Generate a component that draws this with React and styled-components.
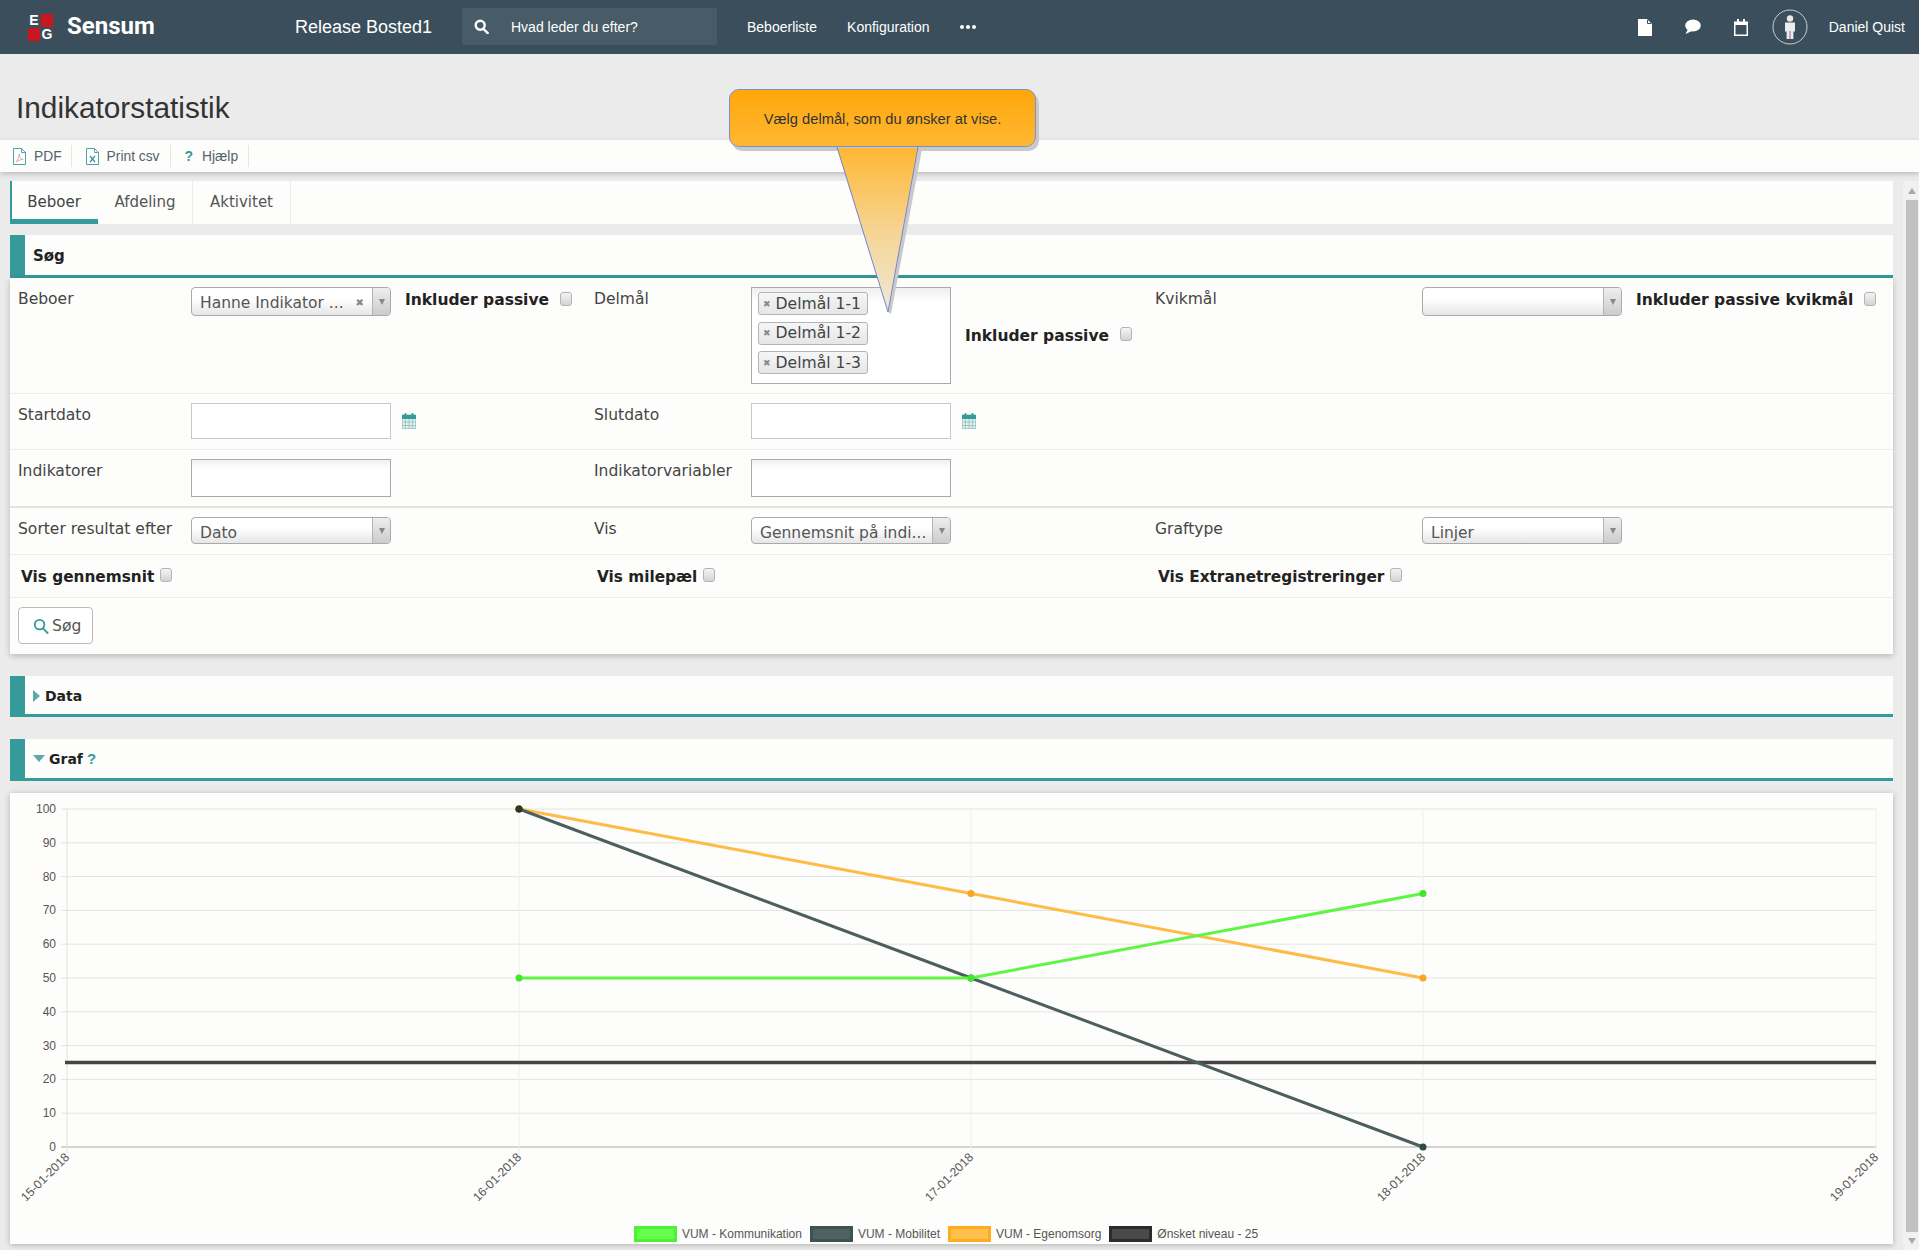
import React from "react";
import styled, { createGlobalStyle } from "styled-components";

const Global = createGlobalStyle`
  html, body { margin: 0; padding: 0; background: #ebebeb; }
  * { box-sizing: border-box; }
`;

const TEAL = "#359a99";
const SANS = `"Liberation Sans", Arial, sans-serif`;
const BODY = `"DejaVu Sans", Verdana, sans-serif`;

const Page = styled.div`
  position: relative;
  width: 1919px;
  height: 1250px;
  overflow: hidden;
  background: #ebebeb;
  font-family: ${BODY};
  color: #444;
`;

/* ---------- top bar ---------- */
const TopBar = styled.header`
  height: 54px;
  background: #3a4f5b;
  display: flex;
  align-items: center;
  color: #fff;
  font-family: ${SANS};
  font-size: 14px;
  padding-left: 28px;
`;
const Logo = styled.div`
  display: grid;
  grid-template-columns: 12px 12px;
  grid-template-rows: 13px 13px;
  gap: 1px;
  width: 25px;
`;
const LogoCell = styled.span`
  background: ${(p) => (p.$red ? "#c8171e" : "transparent")};
  color: #fff;
  font: bold 14px/13px ${SANS};
  text-align: center;
`;
const Brand = styled.span`
  font: bold 24px/1 Roboto, ${SANS};
  margin: 0 0 3px 14px;
  width: 228px;
`;
const Release = styled.span`
  font-size: 18px;
  width: 167px;
`;
const Search = styled.div`
  width: 255px;
  height: 37px;
  background: #475c67;
  border-radius: 2px;
  display: flex;
  align-items: center;
  padding-left: 12px;
  gap: 22px;
  margin: 0 30px 1px 0;
`;
const NavLink = styled.span`
  margin-right: ${(p) => p.$gap}px;
`;
const Dots = styled.span`
  display: flex;
  gap: 2px;
`;
const Dot = styled.i`
  width: 4px;
  height: 4px;
  border-radius: 50%;
  background: #fff;
`;
const RightGroup = styled.div`
  margin-left: auto;
  display: flex;
  align-items: center;
  padding-right: 14px;
`;
const IconSlot = styled.span`
  display: flex;
  margin-right: ${(p) => p.$gap}px;
`;

/* ---------- title + toolbar ---------- */
const TitleBar = styled.div`
  height: 86px;
  padding: 37px 0 0 16px;
`;
const Title = styled.h1`
  margin: 0;
  font: normal 29.8px/34px ${SANS};
  color: #333;
`;
const Toolbar = styled.div`
  height: 32px;
  background: #fdfdfb;
  box-shadow: 0 2px 5px rgba(0, 0, 0, 0.2);
  display: flex;
  align-items: center;
  padding-left: 13px;
  font: 13.8px ${SANS};
  color: #56616b;
  position: relative;
`;
const ToolItem = styled.span`
  display: flex;
  align-items: center;
  height: 22px;
  gap: ${(p) => p.$gap}px;
  padding-right: ${(p) => p.$pr}px;
  margin-right: 14px;
  border-right: 1px solid #e6e6e6;
`;
const QMark = styled.b`
  color: ${TEAL};
  font: bold ${(p) => p.$size || 14}px ${SANS};
`;

/* ---------- body ---------- */
const Body = styled.div`
  display: flex;
  height: 1078px;
  padding: 9px 0 0 10px;
`;
const Main = styled.main`
  width: 1883px;
  display: flex;
  flex-direction: column;
`;
const Scrollbar = styled.div`
  width: 16px;
  margin-left: 10px;
  background: #f1f1f1;
  display: flex;
  flex-direction: column;
  align-items: center;
  padding: 7px 0 6px 2px;
  color: #aaa;
`;
const ScrollArrow = styled.span`
  width: 0;
  height: 0;
  border-left: 4px solid transparent;
  border-right: 4px solid transparent;
  ${(p) => (p.$down ? "border-top: 6px solid #aaa;" : "border-bottom: 6px solid #aaa;")}
`;
const ScrollThumb = styled.div`
  width: 12px;
  flex: 1;
  margin: 6px 0 6px;
  background: #c1c1c1;
`;

const TabBar = styled.nav`
  height: 43px;
  background: #fdfdfb;
  display: flex;
  margin-bottom: 11px;
`;
const Tab = styled.span`
  width: ${(p) => p.$w}px;
  display: flex;
  align-items: center;
  justify-content: center;
  font-size: 15px;
  padding-bottom: 2px;
  color: ${(p) => (p.$active ? "#3d444a" : "#555")};
  border-right: 1px solid #ededed;
  ${(p) =>
    p.$active &&
    `border-left: 2px solid ${TEAL}; border-bottom: 5px solid ${TEAL}; border-right: 0; padding: 3px 2px 0 0;`}
`;

const SectionHead = styled.div`
  height: ${(p) => p.$h}px;
  background: #fdfdfb;
  border-left: 15px solid ${TEAL};
  border-bottom: 3px solid ${TEAL};
  display: flex;
  align-items: center;
  gap: ${(p) => p.$gap || 5}px;
  padding: ${(p) => p.$padTop ?? 1}px 0 0 8px;
  font: bold ${(p) => p.$fs || 15}px ${BODY};
  color: #222;
  margin-top: ${(p) => p.$top || 0}px;
`;
const Caret = styled.span`
  width: 0;
  height: 0;
  ${(p) =>
    p.$open
      ? `border-left: 6px solid transparent; border-right: 6px solid transparent; border-top: 7px solid #5ba9a8; `
      : `border-top: 6px solid transparent; border-bottom: 6px solid transparent; border-left: 7px solid #5ba9a8;`}
`;
const FormPanel = styled.section`
  background: #fdfdfb;
  box-shadow: 0 2px 6px rgba(0, 0, 0, 0.22);
`;
const Row = styled.div`
  height: ${(p) => p.$h}px;
  padding: ${(p) => p.$pad ?? 9}px 0 0 8px;
  display: grid;
  grid-template-columns: 173px 403px 157px 404px 267px 1fr;
  align-items: start;
  border-bottom: ${(p) => (p.$thick ? 2 : 1)}px solid ${(p) => (p.$thick ? "#e2e2e2" : "#ececec")};
  ${(p) => p.$last && "border-bottom: 0;"}
`;
const Label = styled.label`
  font-size: 15.55px;
  line-height: 25px;
  color: #444;
  white-space: nowrap;
`;
const Field = styled.div`
  display: flex;
  align-items: ${(p) => (p.$center ? "center" : "flex-start")};
  gap: ${(p) => p.$gap || 0}px;
  ${(p) => p.$h && `height: ${p.$h}px;`}
`;
const BoldLabel = styled.span`
  font: bold ${(p) => p.$fs || 15.3}px/24px ${BODY};
  color: #222;
  white-space: nowrap;
  margin-top: ${(p) => p.$top || 0}px;
`;
const Check = styled.span`
  display: inline-block;
  width: 12px;
  height: 14px;
  border: 1px solid #b4b4b4;
  border-radius: 3px;
  background: linear-gradient(#f4f4f4, #d4d4d4);
  margin: ${(p) => p.$top ?? 5}px 0 ${(p) => p.$bottom || 0}px ${(p) => p.$left || 0}px;
  flex: none;
`;
const Select = styled.div`
  width: 200px;
  height: ${(p) => p.$h || 29}px;
  border: 1px solid #aaa;
  border-radius: 4px;
  background: linear-gradient(#fff 40%, #e6e6e6);
  display: flex;
  font-size: 15.5px;
  color: #555;
  overflow: hidden;
  flex: none;
`;
const SelectText = styled.span`
  flex: 1;
  padding: ${(p) => p.$top || 5}px 0 0 8px;
  white-space: nowrap;
  overflow: hidden;
  line-height: 20px;
`;
const Clear = styled.span`
  color: #888;
  font: bold 10px/29px ${BODY};
  padding-right: 8px;
`;
const SelectArrow = styled.span`
  width: 18px;
  border-left: 1px solid #b4b4b4;
  background: linear-gradient(#eee, #ccc);
  display: flex;
  align-items: center;
  justify-content: center;
  &::after {
    content: "";
    border-left: 3px solid transparent;
    border-right: 3px solid transparent;
    border-top: 6px solid #888;
  }
`;
const MultiBox = styled.div`
  width: 200px;
  height: 97px;
  border: 1px solid #aaa;
  background: linear-gradient(#eee, #fff 14px);
  padding: 4px 6px;
  display: flex;
  flex-direction: column;
  gap: 6.5px;
  flex: none;
`;
const Chip = styled.span`
  width: 110px;
  height: 23px;
  border: 1px solid #b4b4b4;
  border-radius: 3px;
  background: linear-gradient(#f6f6f6, #e6e6e6);
  font-size: 15.6px;
  line-height: 20px;
  color: #444;
  display: flex;
  align-items: center;
  gap: 5px;
  padding-left: 4px;
  white-space: nowrap;
`;
const ChipX = styled.span`
  color: #888;
  font: bold 9px ${BODY};
`;
const TextBox = styled.div`
  width: 200px;
  height: ${(p) => p.$h}px;
  border: 1px solid ${(p) => (p.$dark ? "#aaa" : "#c8c8c8")};
  background: ${(p) => (p.$dark ? "linear-gradient(#f1f1f1, #fff 10px)" : "#fff")};
  flex: none;
`;
const CalSlot = styled.span`
  display: flex;
  margin: 10px 0 0 11px;
`;
const SpanCell = styled.div`
  grid-column: span 2;
  display: flex;
  align-items: flex-start;
  gap: 6px;
  padding-left: 3px;
`;
const SearchBtn = styled.button`
  width: 75px;
  height: 37px;
  border: 1px solid #bbb;
  border-radius: 4px;
  background: #fff;
  font: 15.6px ${BODY};
  color: #555;
  display: flex;
  align-items: center;
  gap: 3px;
  padding: 0 0 0 14px;
`;

const ChartPanel = styled.section`
  height: 451px;
  margin-top: 12px;
  background: #fdfdfb;
  box-shadow: 0 1px 6px rgba(0, 0, 0, 0.25);
  display: flex;
  flex-direction: column;
`;
const ChartSvg = styled.svg`
  display: block;
  flex: none;
`;
const Legend = styled.div`
  display: flex;
  justify-content: center;
  gap: 8px;
  padding-right: 11px;
  margin-top: 8px;
  font: 12px/16px ${SANS};
  color: #555;
`;
const LegendItem = styled.span`
  display: flex;
  gap: 5px;
`;
const Swatch = styled.i`
  width: 43px;
  height: 16px;
  border: 3px solid ${(p) => p.$c};
  background: ${(p) => p.$f};
`;

/* ---------- tooltip overlay ---------- */
const Bubble = styled.div`
  position: absolute;
  left: 729px;
  top: 89px;
  width: 307px;
  height: 58px;
  border: 1px solid #7a8ed0;
  border-radius: 10px;
  background: linear-gradient(#ffa70a, #ffb733);
  box-shadow: 3px 4px 0 #c9c9c9;
  font: 14.7px/58px ${SANS};
  color: #333;
  text-align: center;
`;
const TailSvg = styled.svg`
  position: absolute;
  left: 834px;
  top: 146px;
`;

/* ---------- icons ---------- */
const SearchIcon = ({ c = "#fff", s = 15, w = 2.6 }) => (
  <svg width={s} height={s} viewBox="0 0 16 16" fill="none" stroke={c} strokeWidth={w}>
    <circle cx="6.6" cy="6.6" r="4.8" />
    <path d="M10 10.4l4.6 4.6" strokeLinecap="round" />
  </svg>
);
const DocIcon = () => (
  <svg width="14" height="17" viewBox="0 0 14 17">
    <path d="M0 0h9l5 5v12H0z" fill="#fff" />
    <path d="M9.5 1v3.5H13" fill="none" stroke="#3a4f5b" strokeWidth="1" />
  </svg>
);
const BubbleIcon = () => (
  <svg width="17" height="16" viewBox="0 0 17 16">
    <ellipse cx="9" cy="6.5" rx="7.8" ry="6" fill="#fff" />
    <path d="M4 10 L1.5 15 L8 12z" fill="#fff" />
  </svg>
);
const CalTop = () => (
  <svg width="14" height="17" viewBox="0 0 14 17">
    <path d="M0 2.5h14V17H0z M1.5 6v9.5h11V6z" fill="#fff" fillRule="evenodd" />
    <rect x="3" y="0" width="2" height="5" fill="#fff" />
    <rect x="9" y="0" width="2" height="5" fill="#fff" />
  </svg>
);
const Avatar = () => (
  <svg width="36" height="36" viewBox="0 0 36 36">
    <circle cx="18" cy="18" r="17" fill="none" stroke="#c9d0d4" strokeWidth="1" />
    <circle cx="18" cy="9.5" r="3.2" fill="#e8e8e8" />
    <path d="M13 13.5h10v9h-1.6V30H14.6v-7.5H13z" fill="#ececec" />
    <path d="M18 22v8" stroke="#a05a9a" strokeWidth="1" />
  </svg>
);
const FileIcon = ({ kind }) => (
  <svg width="13" height="17" viewBox="0 0 13 17" fill="none" stroke="#4fa3a8" strokeWidth="1">
    <path d="M.5.5h8l4 4v12H.5z" fill="#fff" />
    <path d="M8.5.5v4h4" />
    {kind === "pdf" ? (
      <path d="M3 14c2-2 3-5 3.2-8 .2 3 2 5 4 5.5-3 0-5 1-7.200 2.500z" stroke="#d29a9a" strokeWidth=".8" />
    ) : (
      <path d="M4 8l5 6M9 8l-5 6" stroke="#3d8f94" strokeWidth="1.200" />
    )}
  </svg>
);
const CalIcon = () => (
  <svg width="14" height="16" viewBox="0 0 14 16">
    <rect x="0" y="2" width="14" height="14" fill="#dcefee" stroke="#359a99" strokeWidth=".6" />
    <rect x="0" y="2" width="14" height="4" fill="#359a99" />
    <rect x="2.500" y="0" width="2" height="4" rx="1" fill="#359a99" />
    <rect x="9.500" y="0" width="2" height="4" rx="1" fill="#359a99" />
    <path d="M0 9h14M0 12.500h14M3.500 6v10M7 6v10M10.500 6v10" stroke="#8fb9b8" strokeWidth=".7" />
  </svg>
);

/* ---------- chart ---------- */
const PL = 57, PT = 16, PB = 354; // panel coordinates
const XS = [57, 509, 961, 1413, 1866];
const DATES = ["15-01-2018", "16-01-2018", "17-01-2018", "18-01-2018", "19-01-2018"];
const yOf = (v) => PB - ((PB - PT) * v) / 100;
const SERIES = [
  { color: "#ffbb47", dot: "#f5a623", pts: [[1, 100], [2, 75], [3, 50]] },
  { color: "#4c5f5f", dot: "#2f4a4a", pts: [[1, 100], [2, 50], [3, 0]] },
  { color: "#5ff545", dot: "#43e62b", pts: [[1, 50], [2, 50], [3, 75]] },
];

const Chart = () => (
  <ChartSvg width="1883" height="425" viewBox="0 0 1883 425">
    {Array.from({ length: 11 }, (_, i) => i * 10).map((v) => (
      <g key={v}>
        <line x1={PL - 6} x2={XS[4]} y1={yOf(v)} y2={yOf(v)} stroke={v === 0 ? "#aaa" : "#e4e4e4"} strokeWidth="1" />
        <text x={PL - 11} y={yOf(v) + 4} textAnchor="end" fontFamily={SANS} fontSize="12" fill="#555">
          {v}
        </text>
      </g>
    ))}
    {XS.map((x, i) => (
      <g key={x}>
        <line x1={x} x2={x} y1={PT} y2={PB + 6} stroke={i === 0 ? "#e0e0e0" : "#eee"} strokeWidth="1" />
        <text
          transform={`translate(${x + 3},${PB + 11}) rotate(-45)`}
          textAnchor="end"
          fontFamily={SANS}
          fontSize="12.2"
          fill="#555"
        >
          {DATES[i]}
        </text>
      </g>
    ))}
    <line x1={PL - 2} x2={XS[4]} y1={yOf(25)} y2={yOf(25)} stroke="#454545" strokeWidth="3.500" />
    {SERIES.map((s) => (
      <g key={s.color}>
        <polyline
          fill="none"
          stroke={s.color}
          strokeWidth="3"
          points={s.pts.map(([i, v]) => `${XS[i]},${yOf(v)}`).join(" ")}
        />
        {s.pts.map(([i, v]) => (
          <circle key={i} cx={XS[i]} cy={yOf(v)} r="3.5" fill={s.dot} />
        ))}
      </g>
    ))}
    <circle cx={XS[1]} cy={yOf(100)} r="3.5" fill="#33361f" />
  </ChartSvg>
);

export default function App() {
  return (
    <Page>
      <Global />
      <TopBar>
        <Logo>
          <LogoCell>E</LogoCell>
          <LogoCell $red />
          <LogoCell $red />
          <LogoCell>G</LogoCell>
        </Logo>
        <Brand>Sensum</Brand>
        <Release>Release Bosted1</Release>
        <Search>
          <SearchIcon />
          <span>Hvad leder du efter?</span>
        </Search>
        <NavLink $gap={30}>Beboerliste</NavLink>
        <NavLink $gap={30}>Konfiguration</NavLink>
        <Dots>
          <Dot />
          <Dot />
          <Dot />
        </Dots>
        <RightGroup>
          <IconSlot $gap={32}><DocIcon /></IconSlot>
          <IconSlot $gap={33}><BubbleIcon /></IconSlot>
          <IconSlot $gap={24}><CalTop /></IconSlot>
          <IconSlot $gap={21}><Avatar /></IconSlot>
          <span>Daniel Quist</span>
        </RightGroup>
      </TopBar>

      <TitleBar>
        <Title>Indikatorstatistik</Title>
      </TitleBar>

      <Toolbar>
        <ToolItem $gap={8} $pr={9}><FileIcon kind="pdf" />PDF</ToolItem>
        <ToolItem $gap={8} $pr={10}><FileIcon kind="x" />Print csv</ToolItem>
        <ToolItem $gap={9} $pr={10}><QMark>?</QMark>Hjælp</ToolItem>
      </Toolbar>

      <Body>
        <Main>
          <TabBar>
            <Tab $w={88} $active>Beboer</Tab>
            <Tab $w={95}>Afdeling</Tab>
            <Tab $w={98}>Aktivitet</Tab>
          </TabBar>

          <SectionHead $h={43}>Søg</SectionHead>
          <FormPanel>
            <Row $h={116}>
              <Label>Beboer</Label>
              <Field $gap={14}>
                <Select>
                  <SelectText>Hanne Indikator ...</SelectText>
                  <Clear>✖</Clear>
                  <SelectArrow />
                </Select>
                <BoldLabel $fs={15.5} $top={1}>Inkluder passive</BoldLabel>
                <Check $left={-3} />
              </Field>
              <Label>Delmål</Label>
              <Field $center $gap={14} $h={97}>
                <MultiBox>
                  <Chip><ChipX>✖</ChipX>Delmål 1-1</Chip>
                  <Chip><ChipX>✖</ChipX>Delmål 1-2</Chip>
                  <Chip><ChipX>✖</ChipX>Delmål 1-3</Chip>
                </MultiBox>
                <BoldLabel $fs={15.5}>Inkluder passive</BoldLabel>
                <Check $top={0} $bottom={4} $left={-3} />
              </Field>
              <Label>Kvikmål</Label>
              <Field $gap={14}>
                <Select>
                  <SelectText />
                  <SelectArrow />
                </Select>
                <BoldLabel $fs={15.5} $top={1}>Inkluder passive kvikmål</BoldLabel>
                <Check $left={-3} />
              </Field>
            </Row>
            <Row $h={56}>
              <Label>Startdato</Label>
              <Field><TextBox $h={36} /><CalSlot><CalIcon /></CalSlot></Field>
              <Label>Slutdato</Label>
              <Field><TextBox $h={36} /><CalSlot><CalIcon /></CalSlot></Field>
            </Row>
            <Row $h={58} $thick>
              <Label>Indikatorer</Label>
              <Field><TextBox $h={38} $dark /></Field>
              <Label>Indikatorvariabler</Label>
              <Field><TextBox $h={38} $dark /></Field>
            </Row>
            <Row $h={47}>
              <Label>Sorter resultat efter</Label>
              <Field>
                <Select $h={27}>
                  <SelectText>Dato</SelectText>
                  <SelectArrow />
                </Select>
              </Field>
              <Label>Vis</Label>
              <Field>
                <Select $h={27}>
                  <SelectText>Gennemsnit på indi...</SelectText>
                  <SelectArrow />
                </Select>
              </Field>
              <Label>Graftype</Label>
              <Field>
                <Select $h={27}>
                  <SelectText>Linjer</SelectText>
                  <SelectArrow />
                </Select>
              </Field>
            </Row>
            <Row $h={43} $pad={10}>
              <SpanCell><BoldLabel>Vis gennemsnit</BoldLabel><Check $top={3} /></SpanCell>
              <SpanCell><BoldLabel>Vis milepæl</BoldLabel><Check $top={3} /></SpanCell>
              <SpanCell><BoldLabel>Vis Extranetregistreringer</BoldLabel><Check $top={3} /></SpanCell>
            </Row>
            <Row $h={56} $pad={9} $last>
              <SearchBtn><SearchIcon c="#359a99" s={16} w={1.8} />Søg</SearchBtn>
            </Row>
          </FormPanel>

          <SectionHead $h={41} $top={22} $fs={14}><Caret />Data</SectionHead>
          <SectionHead $h={42} $top={22} $gap={4} $fs={14} $padTop={0}>
            <Caret $open />Graf <QMark $size={15}>?</QMark>
          </SectionHead>

          <ChartPanel>
            <Chart />
            <Legend>
              <LegendItem><Swatch $c="#4fef36" $f="#66ff4d" />VUM - Kommunikation</LegendItem>
              <LegendItem><Swatch $c="#3d5252" $f="#4f6262" />VUM - Mobilitet</LegendItem>
              <LegendItem><Swatch $c="#ffab1f" $f="#ffc04d" />VUM - Egenomsorg</LegendItem>
              <LegendItem><Swatch $c="#2b2b2b" $f="#4a4a4a" />Ønsket niveau - 25</LegendItem>
            </Legend>
          </ChartPanel>
        </Main>
        <Scrollbar>
          <ScrollArrow />
          <ScrollThumb />
          <ScrollArrow $down />
        </Scrollbar>
      </Body>

      <Bubble>Vælg delmål, som du ønsker at vise.</Bubble>
      <TailSvg width="90" height="170" viewBox="0 0 90 170">
        <defs>
          <linearGradient id="tailFill" x1="0" y1="0" x2="0" y2="1">
            <stop offset="0" stopColor="#ffb733" />
            <stop offset="0.5" stopColor="#f6d492" />
            <stop offset="1" stopColor="#efe8d8" />
          </linearGradient>
        </defs>
        <path d="M84 3 L88 3 L57 168 L54 166 Z" fill="#c9c9c9" />
        <path d="M3 2 L54 166 L84 2" fill="url(#tailFill)" />
        <path d="M3 1 L54 166 L84 1" fill="none" stroke="#6f86d8" strokeWidth="1" />
      </TailSvg>
    </Page>
  );
}
